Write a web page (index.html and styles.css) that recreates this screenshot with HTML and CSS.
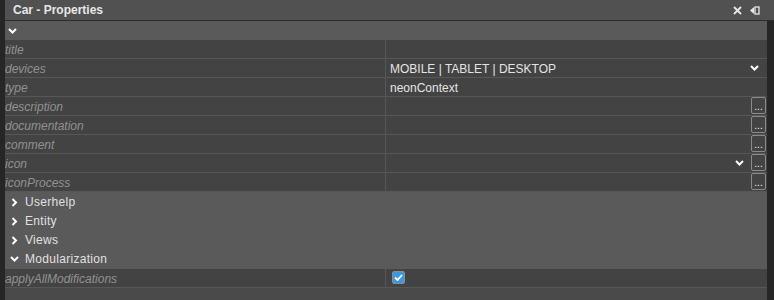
FILE: index.html
```html
<!DOCTYPE html>
<html lang="en">
<head>
    <meta charset="UTF-8">
    <title>Car - Properties</title>
    <link rel="stylesheet" href="styles.css">
</head>
<body>
    <div class="panel">
        <div class="titlebar">
            <span class="title">Car - Properties</span>
            <span class="title-icons">
                <svg width="9" height="9" viewBox="0 0 9 9"><path d="M1 1 L8 8 M8 1 L1 8" stroke="#e8e8e8" stroke-width="1.8"/></svg>
                <svg width="10" height="9" viewBox="0 0 10 9"><path d="M0 4.5 L4 1 L4 8 Z" fill="#e8e8e8"/><rect x="5" y="1" width="4" height="7" fill="none" stroke="#e8e8e8" stroke-width="1.3"/></svg>
            </span>
        </div>

        <div class="inner">
            <div class="collapse-row">
                <svg class="chev" width="9" height="6" viewBox="0 0 9 6"><path d="M1 1 L4.5 4.5 L8 1" fill="none" stroke="#fff" stroke-width="2"/></svg>
            </div>

            <!-- свойства -->
            <div class="props">
                <div class="row"><div class="label">title</div><div class="value"></div></div>
                <div class="row">
                    <div class="label">devices</div>
                    <div class="value">MOBILE | TABLET | DESKTOP
                        <svg class="drop" width="9" height="6" viewBox="0 0 9 6"><path d="M1 1 L4.5 4.5 L8 1" fill="none" stroke="#fff" stroke-width="2"/></svg>
                    </div>
                </div>
                <div class="row"><div class="label">type</div><div class="value">neonContext</div></div>
                <div class="row"><div class="label">description</div><div class="value"><span class="dots">...</span></div></div>
                <div class="row"><div class="label">documentation</div><div class="value"><span class="dots">...</span></div></div>
                <div class="row"><div class="label">comment</div><div class="value"><span class="dots">...</span></div></div>
                <div class="row">
                    <div class="label">icon</div>
                    <div class="value">
                        <svg class="drop near-dots" width="9" height="6" viewBox="0 0 9 6"><path d="M1 1 L4.5 4.5 L8 1" fill="none" stroke="#fff" stroke-width="2"/></svg>
                        <span class="dots">...</span>
                    </div>
                </div>
                <div class="row"><div class="label">iconProcess</div><div class="value"><span class="dots">...</span></div></div>
            </div>

            <!-- группы -->
            <div class="groups">
                <div class="group">
                    <svg class="chev" width="6" height="9" viewBox="0 0 6 9"><path d="M1 1 L4.5 4.5 L1 8" fill="none" stroke="#fff" stroke-width="2"/></svg>
                    Userhelp
                </div>
                <div class="group">
                    <svg class="chev" width="6" height="9" viewBox="0 0 6 9"><path d="M1 1 L4.5 4.5 L1 8" fill="none" stroke="#fff" stroke-width="2"/></svg>
                    Entity
                </div>
                <div class="group">
                    <svg class="chev" width="6" height="9" viewBox="0 0 6 9"><path d="M1 1 L4.5 4.5 L1 8" fill="none" stroke="#fff" stroke-width="2"/></svg>
                    Views
                </div>
                <div class="group">
                    <svg class="chev" width="9" height="6" viewBox="0 0 9 6"><path d="M1 1 L4.5 4.5 L8 1" fill="none" stroke="#fff" stroke-width="2"/></svg>
                    Modularization
                </div>
            </div>

            <div class="props">
                <div class="row">
                    <div class="label">applyAllModifications</div>
                    <div class="value">
                        <span class="check">
                            <svg width="9" height="7" viewBox="0 0 9 7"><path d="M1 3.5 L3.5 6 L8 1" fill="none" stroke="#fff" stroke-width="1.8"/></svg>
                        </span>
                    </div>
                </div>
            </div>
            <div class="bottom"></div>
        </div>
    </div>
</body>
</html>
```

FILE: styles.css
```css
body {
    margin: 0;
    padding: 0;
    background: #262626;
    font-family: "Liberation Sans", Arial, sans-serif;
    font-size: 12px;
    height: 300px;
    overflow: hidden;
}
.panel {
    margin-left: 5px;
    height: 300px;
    display: flex;
    flex-direction: column;
}
.titlebar {
    height: 20px;
    background: #515151;
    border-bottom: 1px solid #2c2c2c;
    display: flex;
    align-items: center;
    justify-content: space-between;
    padding: 0 14px 0 8px;
}
.title {
    color: #e6e6e6;
    font-weight: bold;
}
.title-icons {
    display: flex;
    gap: 8px;
    align-items: center;
}
.inner {
    margin-right: 7px;
    flex: 1;
    display: flex;
    flex-direction: column;
}
.collapse-row {
    height: 19px;
    background: #5a5a5a;
    display: flex;
    align-items: center;
    padding-left: 3px;
}
.props {
    background: #434343;
}
.row {
    display: flex;
    height: 18px;
    border-bottom: 1px solid #575757;
    overflow: hidden;
}
.label {
    width: 380px;
    color: #919191;
    font-style: italic;
    line-height: 20px;
    border-right: 1px solid #575757;
}
.value {
    flex: 1;
    color: #e4e4e4;
    line-height: 20px;
    padding-left: 4px;
    position: relative;
}
.drop {
    position: absolute;
    right: 8px;
    top: 6px;
}
.drop.near-dots {
    right: 23px;
}
.dots {
    position: absolute;
    right: 1px;
    top: 0;
    width: 13px;
    height: 15px;
    border: 1px solid #8a8a8a;
    border-radius: 2px;
    color: #f0f0f0;
    font-size: 10px;
    line-height: 17px;
    text-align: center;
}
.check {
    display: inline-flex;
    align-items: center;
    justify-content: center;
    width: 11px;
    height: 11px;
    margin-top: 2px;
    margin-left: 2px;
    background: #3d96de;
    border: 1px solid #8c8c8c;
    border-radius: 2px;
    vertical-align: top;
}
.groups {
    background: #5a5a5a;
    padding-top: 1px;
}
.group {
    height: 19px;
    display: flex;
    align-items: center;
    color: #e0e0e0;
    font-size: 12px;
    letter-spacing: 0.3px;
    padding-left: 5px;
    padding-bottom: 1px;
    box-sizing: border-box;
    gap: 6px;
}
.group .chev {
    width: 9px;
}
.bottom {
    flex: 1;
    background: #4a4a4a;
}
```
